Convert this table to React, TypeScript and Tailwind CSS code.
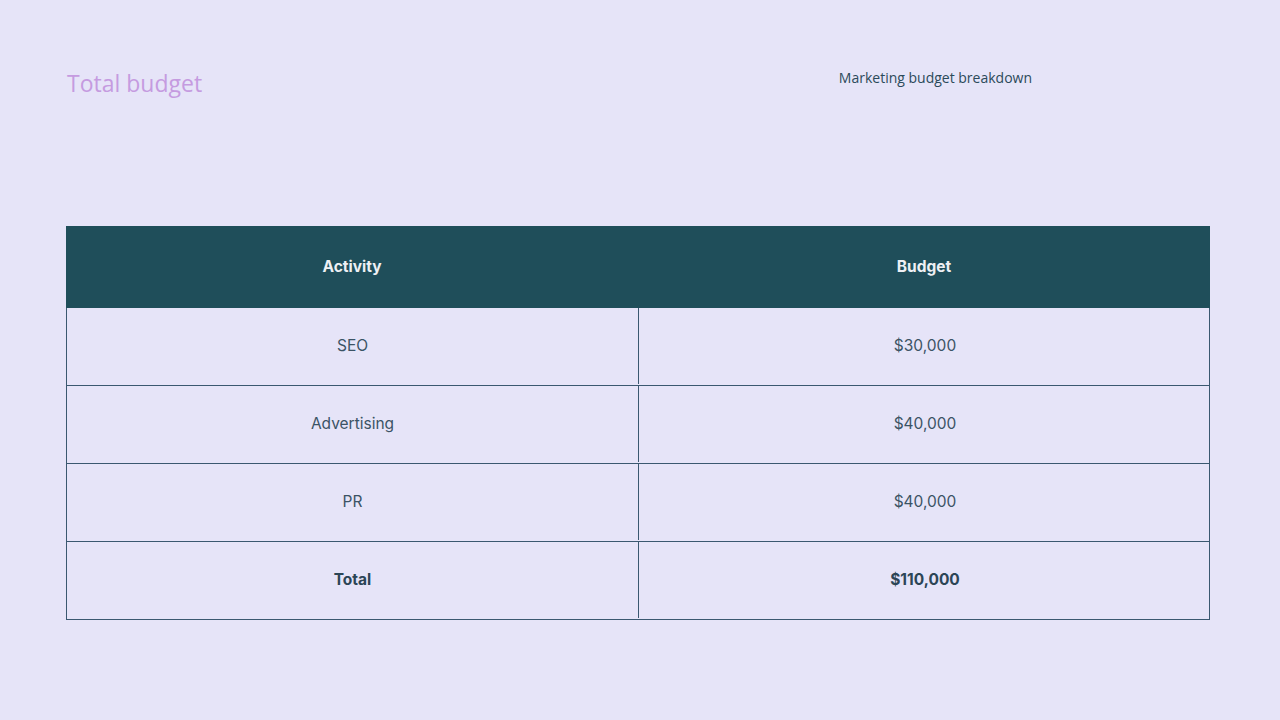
import React from "react";

const rows = [
  { a: "SEO", b: "$30,000" },
  { a: "Advertising", b: "$40,000" },
  { a: "PR", b: "$40,000" },
];

export default function App() {
  return (
    <div className="w-[1280px] h-[720px] bg-[#e6e4f8] relative overflow-hidden" style={{ fontFamily: "Inter, 'Noto Sans', sans-serif" }}>
      <div className="flex justify-between pl-[67px] pr-[248px] pt-[66px]">
        <div className="text-[23px] leading-[34px] text-[#c59be0]" style={{ fontFamily: "'Open Sans', sans-serif" }}>Total budget</div>
        <div className="text-[14px] leading-[24px] text-[#2c4a5a]" style={{ fontFamily: "'Open Sans', sans-serif" }}>Marketing budget breakdown</div>
      </div>
      <div className="mx-[66px] mt-[126px] w-[1144px]">
        <div className="grid grid-cols-[572px_572px] h-[82px] bg-[#1f4e5a] text-[#eef0f4] text-[15.5px] font-bold">
          <div className="flex items-center justify-center">Activity</div>
          <div className="flex items-center justify-center">Budget</div>
        </div>
        {rows.map((r) => (
          <div key={r.a} className="grid grid-cols-[572px_572px] h-[78px] border-b border-x border-[#3a5870] text-[15.5px] text-[#3b5365] pb-[1px]">
            <div className="flex items-center justify-center border-r border-[#3a5870]">{r.a}</div>
            <div className="flex items-center justify-center">{r.b}</div>
          </div>
        ))}
        <div className="grid grid-cols-[572px_572px] h-[78px] border-b border-x border-[#3a5870] text-[15.5px] font-bold text-[#2c4556] pb-[1px]">
          <div className="flex items-center justify-center border-r border-[#3a5870]">Total</div>
          <div className="flex items-center justify-center">$110,000</div>
        </div>
      </div>
    </div>
  );
}
